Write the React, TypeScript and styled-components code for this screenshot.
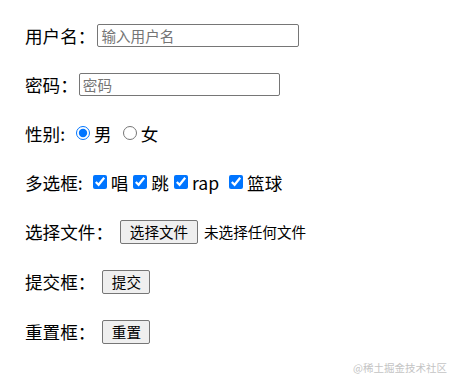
import React from "react";
import styled, { createGlobalStyle } from "styled-components";

const Global = createGlobalStyle`
  body {
    margin: 8px;
    background: #ffffff;
    font-family: "Noto Sans CJK SC", "Noto Sans", sans-serif;
    font-size: 17.6px;
    color: #000;
  }
`;

const Form = styled.form`
  position: relative;
  display: flex;
  flex-direction: column;
  gap: 24px;
  padding: 14.5px 0 0 17px;
  height: 366px;
  box-sizing: border-box;
`;

const Row = styled.div<{ $h?: number }>`
  display: flex;
  align-items: center;
  height: ${(p) => p.$h ?? 25}px;
  line-height: 25px;
  white-space: nowrap;
`;

const Label = styled.span<{ $gap?: number }>`
  margin-right: ${(p) => p.$gap ?? 0}px;
`;

const TextInput = styled.input<{ $w: number }>`
  width: ${(p) => p.$w}px;
  height: 23px;
  box-sizing: border-box;
  padding: 1px 3px;
  border: 1px solid #767676;
  border-radius: 2px;
  font-family: "Noto Sans CJK SC", sans-serif;
  font-size: 14.6px;
  margin: 0;
  &::placeholder {
    color: #757575;
  }
`;

const Choice = styled.label<{ $after?: number }>`
  display: inline-flex;
  align-items: center;
  margin-right: ${(p) => p.$after ?? 0}px;
`;

const Radio = styled.input`
  width: 14px;
  height: 14px;
  margin: 0 4px 0 11px;
  accent-color: #0075ff;
`;

const Check = styled.input`
  width: 14px;
  height: 14px;
  margin: 0 4px 0 5px;
  accent-color: #0075ff;
`;

const Btn = styled.button<{ $w: number }>`
  width: ${(p) => p.$w}px;
  height: 24px;
  box-sizing: border-box;
  padding: 0;
  margin: 0;
  font-family: "Noto Sans CJK SC", sans-serif;
  font-size: 14.6px;
  line-height: 20px;
  color: #000;
  background: #efefef;
  border: 1px solid #767676;
  border-radius: 2px;
`;

const FileNote = styled.span`
  font-size: 14.6px;
  margin-left: 6px;
`;

const Watermark = styled.div`
  position: absolute;
  right: 2px;
  bottom: -1px;
  font-size: 10.5px;
  line-height: 14px;
  color: #c4c4c4;
`;

export default function App() {
  return (
    <>
      <Global />
      <Form onSubmit={(e) => e.preventDefault()}>
        <Row>
          <Label $gap={2}>用户名：</Label>
          <TextInput type="text" placeholder="输入用户名" $w={202} />
        </Row>
        <Row>
          <Label $gap={1}>密码：</Label>
          <TextInput type="password" placeholder="密码" $w={201} />
        </Row>
        <Row>
          <Label>性别:</Label>
          <Choice>
            <Radio type="radio" name="sex" defaultChecked />男
          </Choice>
          <Choice>
            <Radio type="radio" name="sex" />女
          </Choice>
        </Row>
        <Row>
          <Label $gap={5}>多选框:</Label>
          <Choice>
            <Check type="checkbox" defaultChecked />唱
          </Choice>
          <Choice>
            <Check type="checkbox" defaultChecked />跳
          </Choice>
          <Choice $after={5}>
            <Check type="checkbox" defaultChecked />rap
          </Choice>
          <Choice>
            <Check type="checkbox" defaultChecked />篮球
          </Choice>
        </Row>
        <Row $h={26}>
          <Label $gap={7}>选择文件：</Label>
          <Btn type="button" $w={78}>选择文件</Btn>
          <FileNote>未选择任何文件</FileNote>
        </Row>
        <Row $h={26}>
          <Label $gap={7}>提交框：</Label>
          <Btn type="submit" $w={48}>提交</Btn>
        </Row>
        <Row $h={26}>
          <Label $gap={7}>重置框：</Label>
          <Btn type="reset" $w={48}>重置</Btn>
        </Row>
        <Watermark>@稀土掘金技术社区</Watermark>
      </Form>
    </>
  );
}
